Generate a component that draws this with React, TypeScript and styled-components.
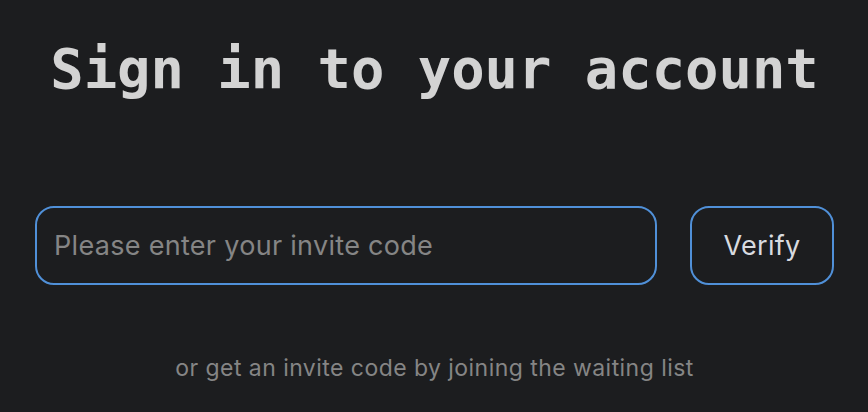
import React from "react";
import styled, { createGlobalStyle } from "styled-components";

const Global = createGlobalStyle`
  html, body { margin: 0; padding: 0; background: #1c1d1f; }
  body { font-family: Inter, "Noto Sans", sans-serif; }
  * { box-sizing: border-box; }
`;

const Page = styled.main`
  width: 868px;
  height: 412px;
  display: flex;
  flex-direction: column;
  align-items: center;
  padding: 34px 34px 0 35px;
`;

const Title = styled.h1`
  margin: 0;
  font-family: "DejaVu Sans Mono", "Liberation Mono", monospace;
  font-weight: bold;
  font-size: 55.5px;
  line-height: 70px;
  color: #d3d3d3;
  white-space: nowrap;
`;

const Form = styled.form`
  margin-top: 102px;
  width: 100%;
  display: flex;
  gap: 33px;
`;

const Input = styled.input`
  flex: 1;
  height: 79px;
  border: 2.5px solid #5090d8;
  border-radius: 19px;
  background: #1c1d1f;
  padding: 0 17px;
  font-family: Inter, "Noto Sans", sans-serif;
  font-size: 27px;
  letter-spacing: 0.3px;
  color: #d0d0d0;
  outline: none;
  &::placeholder { color: #858585; }
`;

const Button = styled.button`
  width: 144px;
  height: 79px;
  border: 2.5px solid #5090d8;
  border-radius: 19px;
  background: #1c1d1f;
  font-family: Inter, "Noto Sans", sans-serif;
  font-size: 27px;
  letter-spacing: 0.3px;
  color: #d8dbe0;
  cursor: pointer;
`;

const Hint = styled.p`
  margin: 69px 0 0;
  font-family: Inter, "Noto Sans", sans-serif;
  font-size: 23px;
  color: #858585;
  letter-spacing: 0.45px;
`;

export default function App() {
  return (
    <>
      <Global />
      <Page>
        <Title>Sign in to your account</Title>
        <Form onSubmit={(e) => e.preventDefault()}>
          <Input placeholder="Please enter your invite code" />
          <Button type="submit">Verify</Button>
        </Form>
        <Hint>or get an invite code by joining the waiting list</Hint>
      </Page>
    </>
  );
}
